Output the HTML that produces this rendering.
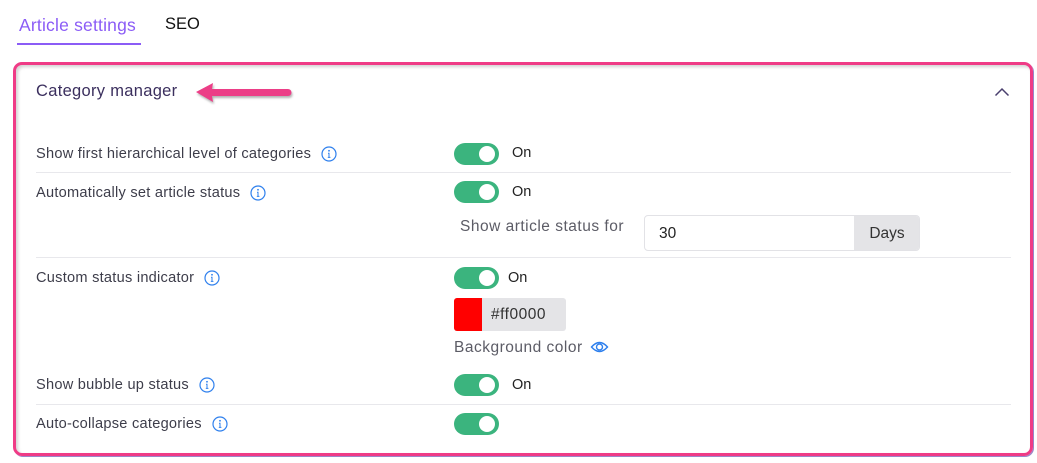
<!DOCTYPE html>
<html><head><meta charset="utf-8"><style>
*{box-sizing:border-box;margin:0;padding:0}
body{width:1037px;height:463px;background:#fff;font-family:"Liberation Sans",sans-serif;position:relative;overflow:hidden;color:#3a3a45}
.a{position:absolute;white-space:nowrap}
.lbl{font-size:14.6px;letter-spacing:.25px;color:#3d3d4a;display:flex;align-items:center}
.lbl svg{width:16px;height:16px;margin-left:10px}
.tg{position:absolute;width:45px;height:22px;border-radius:11px;background:#3bb47e}
.tg::after{content:"";position:absolute;right:4px;top:3px;width:16px;height:16px;border-radius:50%;background:#fff}
.on{font-size:14.5px;color:#222}
.sep{position:absolute;left:36px;width:975px;height:1px;background:#e8e8ec}
.g{font-size:15.5px;letter-spacing:.5px;color:#5c5c66}
</style></head><body>
<div class="a" style="left:19px;top:15px;font-size:17.5px;letter-spacing:.2px;color:#8b5cf6">Article settings</div>
<div class="a" style="left:17px;top:43px;width:124px;height:2px;background:#8b5cf6"></div>
<div class="a" style="left:165px;top:15px;font-size:16.5px;color:#111">SEO</div>

<div class="a" style="left:13px;top:62px;width:1020px;height:394px;border:3px solid #ef3b86;border-radius:9px;box-shadow:1px 1px 0 #9a86c8, inset 2px 2px 3px rgba(0,0,0,.18)"></div>

<div class="a" style="left:36px;top:82px;font-size:16.5px;letter-spacing:.3px;color:#3b2f5e">Category manager</div>
<svg class="a" style="left:193px;top:80px" width="102" height="26"><path d="M3 12 L20 3 L19 9 L95 9 a3.5 3.5 0 0 1 0 7 L19 16 L20 22 Z" fill="#ec3e87" style="filter:drop-shadow(1px 2px 1px rgba(0,0,0,.3))"/></svg>
<svg class="a" style="left:994px;top:87px" width="16" height="10"><path d="M1.5 8.5 L8 2 L14.5 8.5" fill="none" stroke="#4a3f6e" stroke-width="1.5"/></svg>

<svg width="0" height="0" style="position:absolute"><defs><g id="i"><circle cx="8" cy="8" r="7" fill="none" stroke="#2f80ed" stroke-width="1.2"/><circle cx="8" cy="4.8" r=".9" fill="#2f80ed"/><path d="M7 7.2h1v4.2M6.8 11.4h2.6" stroke="#2f80ed" stroke-width="1" fill="none"/></g></defs></svg>

<div class="a lbl" style="left:36px;top:146px">Show first hierarchical level of categories<svg viewBox="0 0 16 16"><use href="#i"/></svg></div>
<div class="tg" style="left:454px;top:143px"></div><div class="a on" style="left:512px;top:145px">On</div>
<div class="sep" style="top:172px"></div>

<div class="a lbl" style="left:36px;top:185px">Automatically set article status<svg viewBox="0 0 16 16"><use href="#i"/></svg></div>
<div class="tg" style="left:454px;top:181px"></div><div class="a on" style="left:512px;top:184px">On</div>
<div class="a g" style="left:460px;top:218px">Show article status for</div>
<div class="a" style="left:644px;top:215px;width:276px;height:36px;border:1px solid #e2e2e6;border-radius:4px;overflow:hidden">
<div class="a" style="left:14px;top:9px;font-size:15.5px;color:#222">30</div>
<div class="a" style="left:209px;top:0;width:66px;height:34px;background:#e4e4e7;font-size:15.5px;color:#333;text-align:center;line-height:35px">Days</div></div>
<div class="sep" style="top:257px"></div>

<div class="a lbl" style="left:36px;top:270px">Custom status indicator<svg viewBox="0 0 16 16"><use href="#i"/></svg></div>
<div class="tg" style="left:454px;top:267px"></div><div class="a on" style="left:508px;top:270px">On</div>
<div class="a" style="left:454px;top:298px;width:112px;height:33px;background:#e4e4e7;border-radius:3px;overflow:hidden">
<div class="a" style="left:37px;top:8px;font-size:15.5px;letter-spacing:.5px;color:#333">#ff0000</div>
<div class="a" style="left:0;top:0;width:28px;height:33px;background:#f00"></div></div>
<div class="a g" style="left:454px;top:339px">Background color</div>
<svg class="a" style="left:590px;top:340px" width="19" height="14" viewBox="0 0 19 14"><path d="M1.5 7 Q9.5 -2 17.5 7 Q9.5 16 1.5 7Z" fill="none" stroke="#2f80ed" stroke-width="1.4"/><circle cx="9.5" cy="7" r="3" fill="none" stroke="#2f80ed" stroke-width="1.4"/></svg>

<div class="a lbl" style="left:36px;top:377px">Show bubble up status<svg viewBox="0 0 16 16"><use href="#i"/></svg></div>
<div class="tg" style="left:454px;top:374px"></div><div class="a on" style="left:512px;top:377px">On</div>
<div class="sep" style="top:404px"></div>

<div class="a lbl" style="left:36px;top:416px">Auto-collapse categories<svg viewBox="0 0 16 16"><use href="#i"/></svg></div>
<div class="tg" style="left:454px;top:413px"></div>
</body></html>
